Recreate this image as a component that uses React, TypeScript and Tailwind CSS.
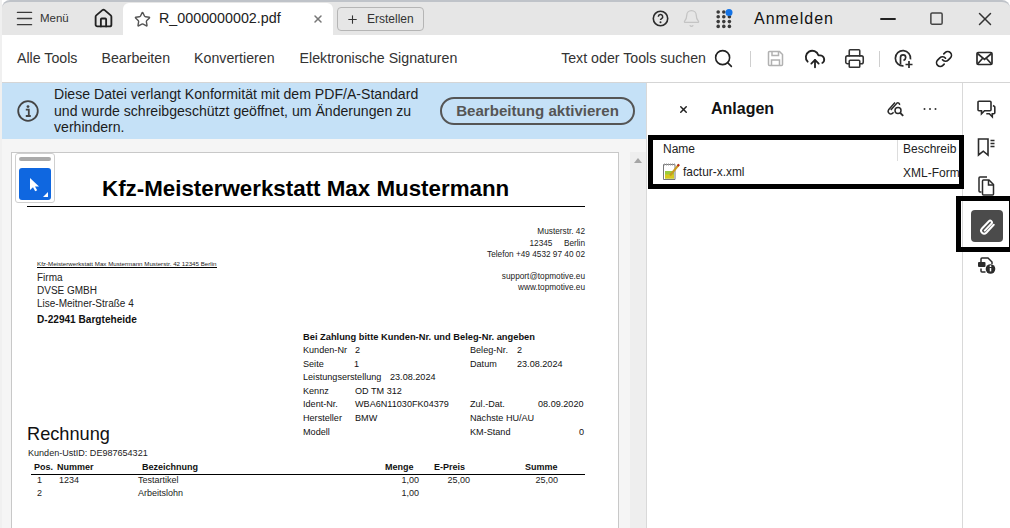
import React from "react";
import { House, Star, Menu, X, Plus, Search, CloudUpload, Printer, Link, Bell, Minus, Square } from "lucide-react";

function AppsIcon() {
  const dots: [number, number][] = [];
  for (let r = 0; r < 4; r++) for (let c = 0; c < 3; c++) dots.push([2.2 + c * 5.6, 3 + r * 4.8]);
  return (
    <svg width="19" height="20" viewBox="0 0 19 20">
      {dots.map(([x, y], i) => (
        <circle key={i} cx={x} cy={y} r="1.8" fill="#3a3a3a" />
      ))}
      <circle cx="13" cy="3.6" r="3.5" fill="#1473e6" />
    </svg>
  );
}

function Help() {
  return (
    <svg width="17" height="17" viewBox="0 0 17 17" fill="none">
      <circle cx="8.5" cy="8.5" r="7.2" stroke="#2b2b2b" strokeWidth="1.6" />
      <path d="M6.3 6.7a2.2 2.2 0 1 1 3.3 1.9c-.7.4-1.1.8-1.1 1.5" stroke="#2b2b2b" strokeWidth="1.5" />
      <circle cx="8.5" cy="12.2" r="1" fill="#2b2b2b" />
    </svg>
  );
}

function LinkPlus() {
  return (
    <svg width="20" height="20" viewBox="0 0 20 20" fill="none" stroke="#2b2b2b" strokeWidth="1.7">
      <path d="M9.5 16.8a7.6 7.6 0 1 1 7-6.5" />
      <path d="M6.5 15.5V8.5a2.6 2.6 0 0 1 5.2 0c0 1.6-1 2.4-2.2 3" />
      <path d="M15 12v7M11.5 15.5h7" />
    </svg>
  );
}

function SaveIcon() {
  return (
    <svg width="17" height="17" viewBox="0 0 17 17" fill="none" stroke="#b1b1b1" strokeWidth="1.5">
      <path d="M1.5 2.5a1 1 0 0 1 1-1h10l3 3v10a1 1 0 0 1-1 1h-12a1 1 0 0 1-1-1z" />
      <path d="M5 1.5v4h6.5v-4M4.5 15.5V10h8v5.5" />
    </svg>
  );
}

function MailIcon() {
  return (
    <svg width="17" height="15" viewBox="0 0 17 15" fill="none" stroke="#2b2b2b" strokeWidth="1.7">
      <rect x="1" y="1.5" width="15" height="12" rx="1.2" />
      <path d="M1.5 2.5l7 6 7-6M1.5 13l5-5.5M15.5 13l-5-5.5" />
    </svg>
  );
}

function AttachSearch() {
  return (
    <svg width="19" height="18" viewBox="0 0 19 18" fill="none" stroke="#2b2b2b" strokeWidth="1.5">
      <path d="M9 2.5L2.6 9.8a2.7 2.7 0 0 0 3.9 3.6l1-1.1" />
      <path d="M4.8 10l6-6.8a1.7 1.7 0 0 1 2.7 1.8" />
      <circle cx="12" cy="10.5" r="3" />
      <path d="M14.2 12.8l3 3" strokeWidth="1.9" />
    </svg>
  );
}

function DotsIcon() {
  return (
    <svg width="14" height="4" viewBox="0 0 14 4" fill="#333">
      <circle cx="1.5" cy="2" r="1" />
      <circle cx="7" cy="2" r="1" />
      <circle cx="12.5" cy="2" r="1" />
    </svg>
  );
}

function CommentIcon() {
  return (
    <svg width="19" height="19" viewBox="0 0 19 19" fill="none" stroke="#2b2b2b" strokeWidth="1.6">
      <path d="M1 2.2a1 1 0 0 1 1-1h11a1 1 0 0 1 1 1v7.6a1 1 0 0 1-1 1H7.5l-3 3v-3H2a1 1 0 0 1-1-1z" />
      <path d="M16 5.5l1.2.7a1 1 0 0 1 .6 1v5.6a1 1 0 0 1-1 1h-1.5v3l-3-3h-3" />
    </svg>
  );
}

function BookmarkIcon() {
  return (
    <svg width="19" height="19" viewBox="0 0 19 19" fill="none" stroke="#2b2b2b" strokeWidth="1.6">
      <path d="M1.5 1h9.5v16l-4.7-3.8L1.5 17z" />
      <path d="M13.5 2.5h4M13.5 5.5h4M13.5 8.5h4" strokeWidth="1.3" />
    </svg>
  );
}

function PagesIcon() {
  return (
    <svg width="17" height="20" viewBox="0 0 17 20" fill="none" stroke="#2b2b2b" strokeWidth="1.5">
      <path d="M3.5 16H2a1 1 0 0 1-1-1V2a1 1 0 0 1 1-1h7" />
      <path d="M4.5 5a1 1 0 0 1 1-1H11l4.5 4.5V18a1 1 0 0 1-1 1h-9a1 1 0 0 1-1-1z" />
      <path d="M10.5 4v5h5" />
    </svg>
  );
}

function ClipIcon() {
  return (
    <svg width="20" height="20" viewBox="0 0 20 20" fill="none" stroke="#fff" strokeWidth="2" strokeLinecap="round">
      <path d="M7.8 14.6l6.6-7a1.7 1.7 0 0 0-2.5-2.4l-6.9 7.3a3 3 0 0 0 4.3 4.2l7.4-7.9" />
    </svg>
  );
}

function SecureInfoIcon() {
  return (
    <svg width="19" height="19" viewBox="0 0 19 19" fill="none">
      <path d="M4 6V3a1 1 0 0 1 1-1h6l4 4v2M4 12.5V15a1 1 0 0 0 1 1h3.5" stroke="#2b2b2b" strokeWidth="1.5" />
      <rect x="1" y="6" width="7.5" height="5" rx="1" fill="#2b2b2b" />
      <circle cx="13.5" cy="13" r="4.8" fill="#2b2b2b" />
      <path d="M13.5 12v3.4" stroke="#fff" strokeWidth="1.5" />
      <circle cx="13.5" cy="10.2" r=".9" fill="#fff" />
    </svg>
  );
}

function XmlIcon() {
  return (
    <svg width="17" height="17" viewBox="0 0 17 17">
      <path d="M.5 1.5h11.5v15H.5z" fill="#fff" stroke="#777" />
      <path d="M1 1.5h11" stroke="#999" strokeWidth="2" strokeDasharray="1 1" />
      <rect x="2" y="8" width="9" height="7.5" fill="#9acb3c" />
      <rect x="2" y="11.5" width="9" height="4" fill="#d7c81e" />
      <path d="M7 12.5l9-11" stroke="#c99a1e" strokeWidth="2" />
      <path d="M14.6 3.2l1.4-1.8" stroke="#b3261e" strokeWidth="2" />
    </svg>
  );
}

function DocRow({ cells }: { cells: [string, number][] }) {
  return (
    <div className="flex h-[13.6px] items-center text-[9.1px] leading-[13.6px] text-[#111]">
      {cells.map(([t, w], i) => (
        <span key={i} style={{ width: w }} className="shrink-0 whitespace-pre">
          {t}
        </span>
      ))}
    </div>
  );
}

export default function App() {
  return (
    <div className="relative flex h-[528px] w-[1010px] flex-col overflow-hidden border-l-2 border-[#f0f0f0] bg-white font-['Liberation_Sans',Arial,sans-serif] text-[#222]">
      {/* title bar */}
      <div className="flex h-[35px] shrink-0 items-end rounded-tl-lg rounded-tr-lg border-t-2 border-[#bfc3c9] bg-[#e6e6e6]">
        <div className="flex h-[33px] w-[121px] shrink-0 items-center pl-[12px]">
          <Menu size={21} strokeWidth={1.7} className="shrink-0 text-[#3a3a3a]" />
          <span className="ml-[5px] text-[11.5px] text-[#333]">Menü</span>
          <House size={21} strokeWidth={2.1} className="ml-[24px] shrink-0 text-[#222]" />
        </div>
        <div className="flex h-[32px] w-[210px] shrink-0 items-center rounded-t-md bg-white pl-[11px]">
          <Star size={17} strokeWidth={2} className="shrink-0 text-[#555]" />
          <span className="ml-[8px] w-[153px] shrink-0 text-[14.3px] text-[#222]">R_0000000002.pdf</span>
          <X size={12} strokeWidth={3} className="shrink-0 text-[#777]" />
        </div>
        <div className="mb-[4px] ml-[4px] flex h-[24px] w-[87px] shrink-0 items-center rounded-[4px] border border-[#b5b5b5] pl-[8px]">
          <Plus size={13} strokeWidth={2} className="text-[#333]" />
          <span className="ml-[8px] text-[12px] text-[#333]">Erstellen</span>
        </div>
        <div className="flex h-[33px] flex-1 items-center justify-end">
          <Help />
          <Bell size={19} strokeWidth={1.6} className="ml-[13px] text-[#c4c4c4]" />
          <span className="ml-[15px]"><AppsIcon /></span>
          <span className="ml-[19px] text-[16px] tracking-[1px] text-[#111]">Anmelden</span>
          <Minus size={24} strokeWidth={1.9} className="ml-[42px] text-[#222]" />
          <Square size={15} strokeWidth={2.4} className="ml-[29px] text-[#444]" />
          <X size={22} strokeWidth={1.6} className="ml-[30px] mr-[14px] text-[#333]" />
        </div>
      </div>

      {/* toolbar */}
      <div className="flex h-[48px] shrink-0 items-center border-b border-[#d5d5d5] pl-[15px] text-[14.2px] text-[#333]">
        <span>Alle Tools</span>
        <span className="ml-[24px]">Bearbeiten</span>
        <span className="ml-[24px]">Konvertieren</span>
        <span className="ml-[25px]">Elektronische Signaturen</span>
        <div className="ml-auto flex items-center pr-[17px]">
          <span className="text-[14.2px] text-[#333]">Text oder Tools suchen</span>
          <Search size={21} strokeWidth={1.8} className="ml-[7px] text-[#222]" />
          <span className="ml-[16px] h-[16px] w-px bg-[#cfcfcf]" />
          <span className="ml-[16px]"><SaveIcon /></span>
          <CloudUpload size={22} strokeWidth={2} className="ml-[20px] text-[#222]" />
          <Printer size={21} strokeWidth={1.8} className="ml-[18px] text-[#333]" />
          <span className="ml-[14px] h-[16px] w-px bg-[#cfcfcf]" />
          <span className="ml-[14px]"><LinkPlus /></span>
          <Link size={18} strokeWidth={2.2} className="ml-[21px] text-[#222]" />
          <span className="ml-[23px]"><MailIcon /></span>
        </div>
      </div>

      {/* body */}
      <div className="flex min-h-0 flex-1">
        {/* left */}
        <div className="flex w-[644px] shrink-0 flex-col">
          <div className="flex h-[56px] shrink-0 items-center bg-[#c5e1f7] pl-[15px]">
            <svg width="22" height="22" viewBox="0 0 22 22" fill="none" className="shrink-0">
              <circle cx="11" cy="11" r="9.8" stroke="#444" strokeWidth="1.8" />
              <circle cx="11" cy="6.6" r="1.4" fill="#444" />
              <path d="M8.8 9.6h3v6.2M8.8 16h5" stroke="#444" strokeWidth="1.8" />
            </svg>
            <p className="ml-[15px] w-[385px] shrink-0 text-[14.1px] leading-[16.5px] text-[#1c1c1c]">
              Diese Datei verlangt Konformität mit dem PDF/A-Standard und wurde schreibgeschützt geöffnet, um Änderungen zu verhindern.
            </p>
            <div className="ml-px flex h-[28px] w-[195px] shrink-0 items-center justify-center rounded-full border-2 border-[#555] text-[15.1px] font-bold text-[#555]">
              Bearbeitung aktivieren
            </div>
          </div>
          <div className="flex min-h-0 flex-1 overflow-hidden bg-[#f5f5f5] pl-[9px] pt-[13px]">
            {/* PDF page */}
            <div className="relative h-[420px] w-[608px] shrink-0 border border-[#c8c8c8] bg-white pl-[15px]">
              {/* floating tool */}
              <div className="absolute left-[3px] top-0 flex h-[50px] w-[40px] flex-col items-center rounded-[3px] border border-[#cfcfcf] bg-white pt-[3px]">
                <div className="h-[4px] w-[32px] rounded-sm bg-[#aaaaaa]" />
                <div className="relative mt-[7px] flex h-[32px] w-[32px] items-center justify-center rounded-[3px] bg-[#0f67e0]">
                  <svg width="12" height="15" viewBox="0 0 12 15">
                    <path d="M1 1v12l3-2.8 2.2 4 2-1-2.2-3.7H10z" fill="#fff" />
                  </svg>
                  <span className="absolute bottom-[3px] right-[3px] h-0 w-0 border-b-[5px] border-l-[5px] border-b-white border-l-transparent" />
                </div>
              </div>

              <h1 className="h-[54px] w-[558px] border-b border-black pl-[75px] pt-[22px] text-[22.35px] font-bold leading-[27px] text-black">
                Kfz-Meisterwerkstatt Max Mustermann
              </h1>

              <div className="mt-[18px] flex w-[558px]">
                <div className="w-[200px] shrink-0 pl-[10px] pt-[36px]">
                  <div className="w-[180px] whitespace-nowrap border-b border-black text-[6.2px] leading-[6px] text-[#222]">
                    Kfz-Meisterwerkstatt Max Mustermann Musterstr. 42  12345 Berlin
                  </div>
                  <div className="mt-[3px] text-[10px] leading-[13px] text-[#222]">
                    <div>Firma</div>
                    <div>DVSE GMBH</div>
                    <div>Lise-Meitner-Straße 4</div>
                  </div>
                  <div className="mt-[3px] text-[10.1px] font-bold leading-[13px] text-[#111]">D-22941 Bargteheide</div>
                </div>
                <div className="flex-1 text-right text-[8.25px] leading-[11.6px] text-[#222]">
                  <div className="mt-px">Musterstr. 42</div>
                  <div className="whitespace-pre">12345     Berlin</div>
                  <div>Telefon +49 4532 97 40 02</div>
                  <div className="mt-[10px]">support@topmotive.eu</div>
                  <div>www.topmotive.eu</div>
                </div>
              </div>

              <div className="ml-[276px] mt-[4px] w-[290px]">
                <div className="whitespace-nowrap text-[9.3px] font-bold leading-[14px] text-[#111]">Bei Zahlung bitte Kunden-Nr. und Beleg-Nr. angeben</div>
                <DocRow cells={[["Kunden-Nr", 52], ["2", 115], ["Beleg-Nr.", 47], ["2", 40]]} />
                <DocRow cells={[["Seite", 51], ["1", 116], ["Datum", 47], ["23.08.2024", 50]]} />
                <DocRow cells={[["Leistungserstellung", 87], ["23.08.2024", 60]]} />
                <DocRow cells={[["Kennz", 52], ["OD TM 312", 80]]} />
                <DocRow cells={[["Ident-Nr.", 52], ["WBA6N11030FK04379", 115], ["Zul.-Dat.", 68], ["08.09.2020", 48]]} />
                <DocRow cells={[["Hersteller", 52], ["BMW", 115], ["Nächste HU/AU", 90]]} />
                <div className="flex h-[13.6px] items-center text-[9.1px] text-[#111]">
                  <span className="w-[167px]">Modell</span>
                  <span className="w-[109px]">KM-Stand</span>
                  <span>0</span>
                </div>
              </div>

              <div className="-mt-[16px] w-[558px]">
                <div className="text-[18.2px] leading-[22px] text-[#111]">Rechnung</div>
                <div className="mt-px pl-[1px] text-[9.05px] leading-[14px] text-[#222]">Kunden-UstID: DE987654321</div>
                <div className="ml-[4px] mt-[1px] flex h-[14px] w-[554px] items-center border-b border-black text-[9px] font-bold text-[#111]">
                  <span className="ml-[3px] w-[23px]">Pos.</span>
                  <span className="w-[85px]">Nummer</span>
                  <span className="w-[243px]">Bezeichnung</span>
                  <span className="w-[49px]">Menge</span>
                  <span className="w-[91px]">E-Preis</span>
                  <span>Summe</span>
                </div>
                <div className="ml-[4px] -mt-px flex h-[13px] items-center text-[9px] text-[#222]">
                  <span className="ml-[6px] w-[22px]">1</span>
                  <span className="w-[79px]">1234</span>
                  <span className="w-[248px]">Testartikel</span>
                  <span className="w-[33px] text-right">1,00</span>
                  <span className="w-[51px] text-right">25,00</span>
                  <span className="w-[88px] text-right">25,00</span>
                </div>
                <div className="ml-[4px] flex h-[13px] items-center text-[9px] text-[#222]">
                  <span className="ml-[6px] w-[101px]">2</span>
                  <span className="w-[248px]">Arbeitslohn</span>
                  <span className="w-[33px] text-right">1,00</span>
                </div>
              </div>
            </div>
            {/* scrollbar */}
            <div className="ml-[11px] flex h-full w-[16px] shrink-0 justify-center bg-[#eeeeee] pt-[6px]">
              <span className="h-0 w-0 border-x-[4px] border-b-[5px] border-x-transparent border-b-[#a5a5a5]" />
            </div>
          </div>
        </div>

        {/* attachments panel */}
        <div className="flex w-[316px] shrink-0 flex-col border-l border-[#d9d9d9]">
          <div className="flex h-[52px] shrink-0 items-center pl-[31px]">
            <X size={11} strokeWidth={3.2} className="text-[#222]" />
            <span className="ml-[22px] text-[16px] font-bold text-[#111]">Anlagen</span>
            <span className="ml-[112px]"><AttachSearch /></span>
            <span className="ml-[18px]"><DotsIcon /></span>
          </div>
          <div className="ml-[7px] overflow-hidden">
            <div className="flex h-[26px] items-end whitespace-nowrap text-[12px] text-[#222]">
              <span className="ml-[9px] h-[26px] w-[234px] leading-[28px]">Name</span>
              <span className="h-[21px] border-l border-[#ddd] pl-[5px] leading-[18px]">Beschreib</span>
            </div>
            <div className="flex h-[21px] items-center whitespace-nowrap pt-[2px] text-[12px] text-[#222]">
              <span className="ml-[9px] -mt-[2px]"><XmlIcon /></span>
              <span className="ml-[3px] w-[220px] text-[11.9px]">factur-x.xml</span>
              <span>XML-Form</span>
            </div>
          </div>
        </div>

        {/* right rail */}
        <div className="flex flex-1 flex-col items-center border-l border-[#d9d9d9] pt-[17px]">
          <CommentIcon />
          <span className="mt-[19px]"><BookmarkIcon /></span>
          <span className="mt-[19px]"><PagesIcon /></span>
          <div className="mt-[14px] flex h-[32px] w-[32px] items-center justify-center rounded-[4px] bg-[#4b4b4b]">
            <ClipIcon />
          </div>
          <span className="mt-[14px]"><SecureInfoIcon /></span>
        </div>
      </div>

      {/* black highlight frames drawn over the screenshot */}
      <div className="pointer-events-none absolute left-[646px] top-[135px] h-[54px] w-[316px] border-[5px] border-black" />
      <div className="pointer-events-none absolute left-[954px] top-[196px] h-[56px] w-[58px] border-[5px] border-black" />
    </div>
  );
}
